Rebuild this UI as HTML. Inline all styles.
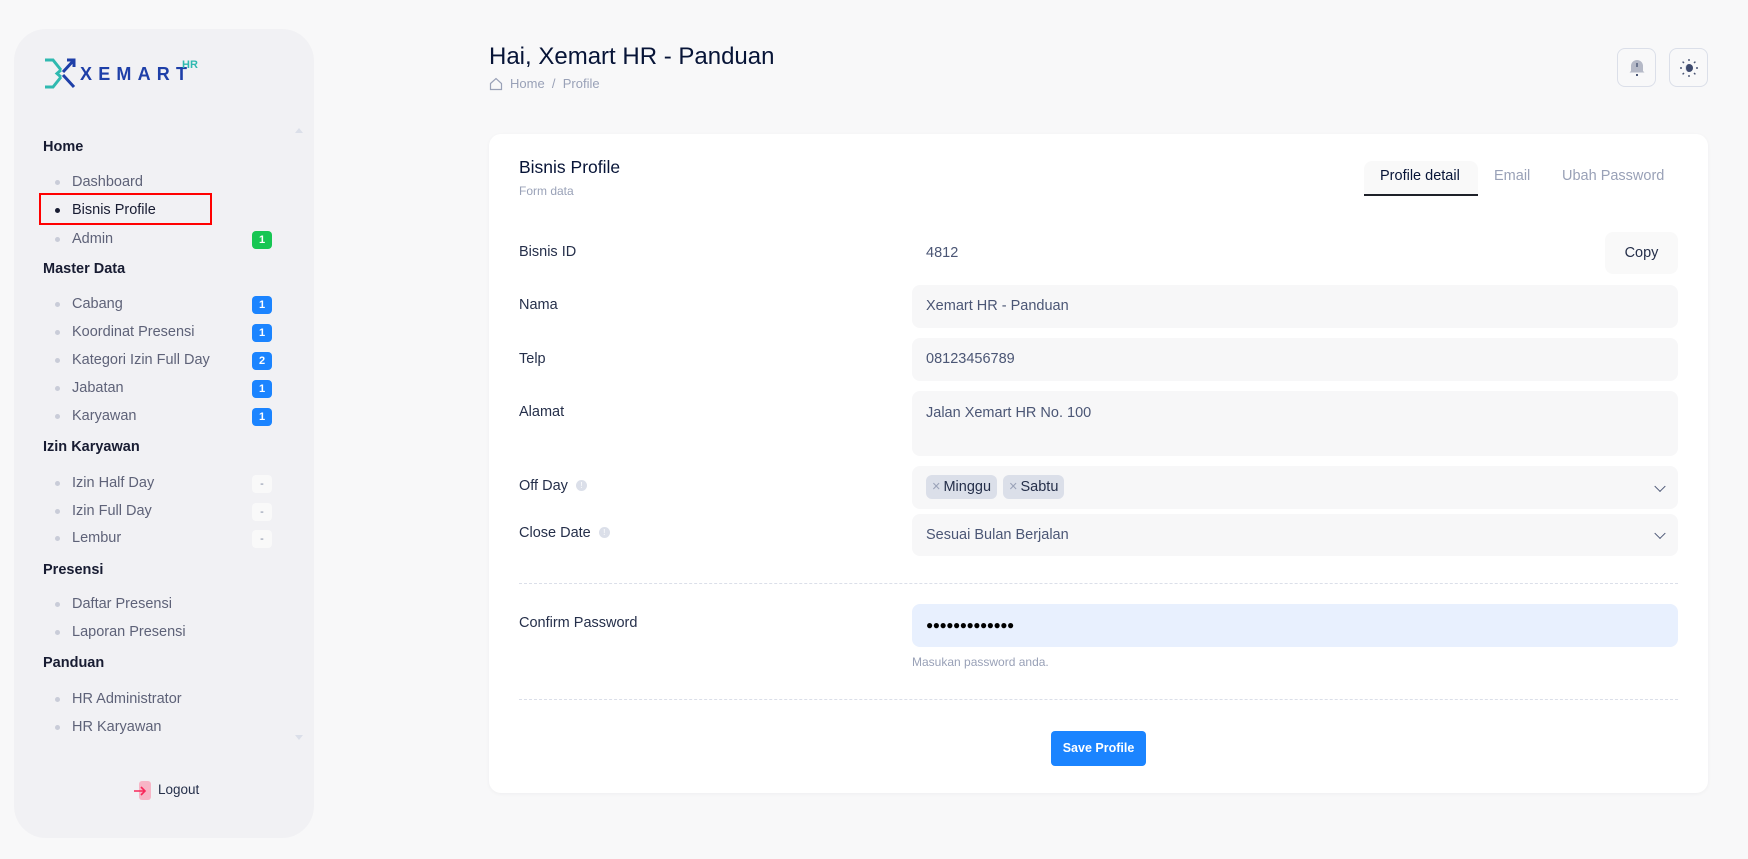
<!DOCTYPE html>
<html><head><meta charset="utf-8"><style>
*{box-sizing:border-box;margin:0;padding:0}
body{width:1748px;height:859px;background:#f8f8f9;font-family:"Liberation Sans",sans-serif;position:relative;overflow:hidden;color:#181c32}
.a{position:absolute}
.side{left:14px;top:29px;width:300px;height:809px;background:#f1f1f4;border-radius:32px}
.h{left:43px;font-size:14.5px;font-weight:bold;color:#181c32}
.it{left:72px;font-size:14.5px;color:#5e6278}
.dot{left:55px;width:5px;height:5px;border-radius:50%;background:#c9ccd8}
.bd{left:252px;width:20px;height:18px;border-radius:4px;background:#1b84ff;color:#fff;font-size:11px;font-weight:bold;text-align:center;line-height:18px}
.bd.g{background:#17c653}.bd.e{background:#f9f9f9;color:#78829d;font-weight:normal}
.lbl{left:519px;font-size:14.5px;color:#252f4a}
.inp{left:912px;width:766px;background:#f7f7f8;border-radius:8px;font-size:14.5px;color:#4b5675;padding-left:14px}
.chev{right:14px;top:50%;width:8px;height:8px;border-right:1.6px solid #4b5675;border-bottom:1.6px solid #4b5675;transform:translateY(-70%) rotate(45deg)}
.tag{display:inline-block;background:#dbdfe9;border-radius:6px;height:24px;line-height:24px;padding:0 6px;font-size:14.5px;color:#252f4a;margin-right:6px}
.tag span{color:#99a1b7;margin-right:3px}
.info{display:inline-block;width:11px;height:11px;border-radius:50%;background:#dbdfe9;color:#fff;font-size:8px;text-align:center;line-height:11px;vertical-align:2px;margin-left:8px}
.dash{left:519px;width:1159px;border-top:1px dashed #dbdfe9}
</style></head><body>
<div class="a side"></div>
<svg class="a" style="left:43px;top:58px" width="34" height="31" viewBox="0 0 34 31"><path d="M2 2h8l8 10M2 29h8l8-10M18 12l-4 3.5 4 3.5" stroke="#2fb9b0" stroke-width="3" fill="none"/><path d="M31 2L20 14M31 29L20 17M24 2h7v7" stroke="#1e3fa8" stroke-width="3" fill="none"/></svg>
<div class="a" style="left:80px;top:64px;font-size:18px;font-weight:bold;letter-spacing:6.2px;color:#1e3fa8">XEMART</div>
<div class="a" style="left:182px;top:59px;font-size:11px;font-weight:bold;color:#2fb9b0">HR</div>
<div class="a" style="left:295px;top:128px;border:4px solid transparent;border-bottom:5px solid #dbdfe9;border-top:0"></div>
<div class="a" style="left:295px;top:735px;border:4px solid transparent;border-top:5px solid #dbdfe9;border-bottom:0"></div>

<div class="a h" style="top:139px">Home</div>
<div class="a dot" style="top:180px"></div><div class="a it" style="top:174px">Dashboard</div>
<div class="a" style="left:39px;top:193px;width:173px;height:32px;border:2px solid #f00"></div>
<div class="a dot" style="top:208px;background:#181c32"></div><div class="a it" style="top:202px;color:#181c32">Bisnis Profile</div>
<div class="a dot" style="top:237px"></div><div class="a it" style="top:231px">Admin</div><div class="a bd g" style="top:231px">1</div>
<div class="a h" style="top:261px">Master Data</div>
<div class="a dot" style="top:302px"></div><div class="a it" style="top:296px">Cabang</div><div class="a bd" style="top:296px">1</div>
<div class="a dot" style="top:330px"></div><div class="a it" style="top:324px">Koordinat Presensi</div><div class="a bd" style="top:324px">1</div>
<div class="a dot" style="top:358px"></div><div class="a it" style="top:352px">Kategori Izin Full Day</div><div class="a bd" style="top:352px">2</div>
<div class="a dot" style="top:386px"></div><div class="a it" style="top:380px">Jabatan</div><div class="a bd" style="top:380px">1</div>
<div class="a dot" style="top:414px"></div><div class="a it" style="top:408px">Karyawan</div><div class="a bd" style="top:408px">1</div>
<div class="a h" style="top:439px">Izin Karyawan</div>
<div class="a dot" style="top:481px"></div><div class="a it" style="top:475px">Izin Half Day</div><div class="a bd e" style="top:475px">-</div>
<div class="a dot" style="top:509px"></div><div class="a it" style="top:503px">Izin Full Day</div><div class="a bd e" style="top:503px">-</div>
<div class="a dot" style="top:536px"></div><div class="a it" style="top:530px">Lembur</div><div class="a bd e" style="top:530px">-</div>
<div class="a h" style="top:562px">Presensi</div>
<div class="a dot" style="top:602px"></div><div class="a it" style="top:596px">Daftar Presensi</div>
<div class="a dot" style="top:630px"></div><div class="a it" style="top:624px">Laporan Presensi</div>
<div class="a h" style="top:655px">Panduan</div>
<div class="a dot" style="top:697px"></div><div class="a it" style="top:691px">HR Administrator</div>
<div class="a dot" style="top:725px"></div><div class="a it" style="top:719px">HR Karyawan</div>
<div class="a" style="left:139px;top:781px;width:12px;height:19px;background:#f7b5c6;border-radius:3px"></div>
<svg class="a" style="left:133px;top:785px" width="14" height="12" viewBox="0 0 14 12"><path d="M1 6h11M8 2l4 4-4 4" stroke="#f8285a" stroke-width="1.6" fill="none"/></svg>
<div class="a" style="left:158px;top:782px;font-size:13.5px;color:#252f4a">Logout</div>

<div class="a" style="left:489px;top:43px;font-size:24px;color:#071437">Hai, Xemart HR - Panduan</div>
<svg class="a" style="left:489px;top:77px" width="14" height="14" viewBox="0 0 14 14"><path d="M1.5 6.5L7 1.5l5.5 5V12.5h-11z" fill="none" stroke="#99a1b7" stroke-width="1.2"/></svg>
<div class="a" style="left:510px;top:76px;font-size:13px;color:#99a1b7">Home &nbsp;/&nbsp; Profile</div>
<div class="a" style="left:1617px;top:48px;width:39px;height:39px;border:1px solid #dbdfe9;border-radius:8px"></div>
<svg class="a" style="left:1627px;top:57px" width="20" height="20" viewBox="0 0 20 20"><path d="M4 14V9a6 6 0 0112 0v5l1.5 1.5h-15z" fill="#b5b9c7"/><rect x="9.3" y="6" width="1.4" height="4" fill="#4b5675"/><rect x="9" y="17" width="2" height="2" fill="#4b5675"/></svg>
<div class="a" style="left:1669px;top:48px;width:39px;height:39px;border:1px solid #dbdfe9;border-radius:8px"></div>
<svg class="a" style="left:1679px;top:58px" width="20" height="20" viewBox="0 0 20 20"><circle cx="10" cy="10" r="4" fill="#dbdfe9"/><path d="M10 6a4 4 0 010 8a3 4 0 010-8z" fill="#3e4a6e"/><g stroke="#4b5675" stroke-width="1.4"><path d="M10 1v2M10 17v2M1 10h2M17 10h2M3.6 3.6l1.4 1.4M15 15l1.4 1.4M3.6 16.4L5 15M15 5l1.4-1.4"/></g></svg>

<div class="a" style="left:489px;top:134px;width:1219px;height:659px;background:#fff;border-radius:12px;box-shadow:0 1px 4px rgba(0,0,0,.04)"></div>
<div class="a" style="left:519px;top:157px;font-size:17.5px;color:#071437">Bisnis Profile</div>
<div class="a" style="left:519px;top:184px;font-size:12px;color:#99a1b7">Form data</div>
<div class="a" style="left:1364px;top:161px;width:114px;height:35px;background:#f9f9f9;border-radius:8px 8px 0 0;border-bottom:2px solid #1e2129"></div>
<div class="a" style="left:1380px;top:168px;font-size:14.5px;color:#071437">Profile detail</div>
<div class="a" style="left:1494px;top:168px;font-size:14.5px;color:#99a1b7">Email</div>
<div class="a" style="left:1562px;top:168px;font-size:14.5px;color:#99a1b7">Ubah Password</div>

<div class="a lbl" style="top:244px">Bisnis ID</div>
<div class="a" style="left:926px;top:245px;font-size:14.5px;color:#4b5675">4812</div>
<div class="a" style="left:1605px;top:232px;width:73px;height:42px;background:#f9f9f9;border-radius:8px;text-align:center;line-height:42px;font-size:14.5px;color:#252f4a">Copy</div>

<div class="a lbl" style="top:297px">Nama</div>
<div class="a inp" style="top:285px;height:43px;line-height:43px">Xemart HR - Panduan</div>
<div class="a lbl" style="top:351px">Telp</div>
<div class="a inp" style="top:338px;height:43px;line-height:43px">08123456789</div>
<div class="a lbl" style="top:404px">Alamat</div>
<div class="a inp" style="top:391px;height:65px;padding-top:14px">Jalan Xemart HR No. 100</div>
<div class="a lbl" style="top:478px">Off Day<span class="info">!</span></div>
<div class="a inp" style="top:466px;height:43px;padding-top:9px"><span class="tag"><span>×</span>Minggu</span><span class="tag"><span>×</span>Sabtu</span><div class="a chev"></div></div>
<div class="a lbl" style="top:525px">Close Date<span class="info">!</span></div>
<div class="a inp" style="top:514px;height:42px;line-height:42px">Sesuai Bulan Berjalan<div class="a chev"></div></div>
<div class="a dash" style="top:583px"></div>
<div class="a lbl" style="top:615px">Confirm Password</div>
<div class="a inp" style="top:604px;height:43px;line-height:43px;background:#e8f0fe;color:#000;font-size:12px;letter-spacing:-0.5px">●●●●●●●●●●●●●</div>
<div class="a" style="left:912px;top:655px;font-size:12px;color:#99a1b7">Masukan password anda.</div>
<div class="a dash" style="top:699px"></div>
<div class="a" style="left:1051px;top:731px;width:95px;height:35px;background:#1b84ff;border-radius:4px;color:#fff;font-size:12.5px;font-weight:bold;text-align:center;line-height:35px">Save Profile</div>
</body></html>
